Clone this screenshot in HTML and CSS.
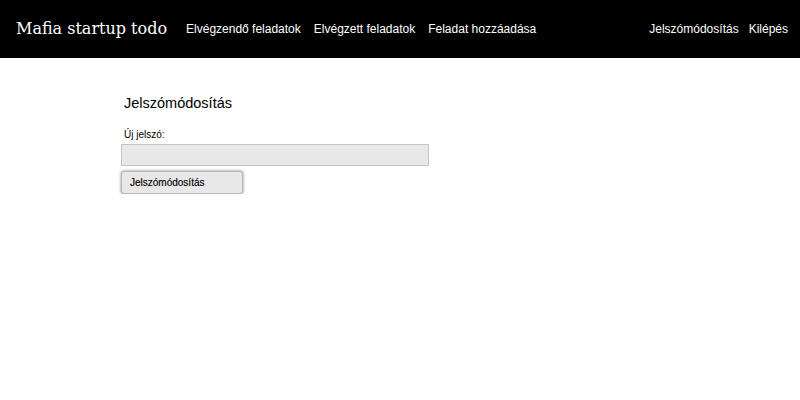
FILE: index.html
```html
<!DOCTYPE html>
<html lang="hu">
<head>
<meta charset="utf-8">
<title>Mafia startup todo</title>
<link rel="stylesheet" href="styles.css">
</head>
<body>
<header class="topbar">
  <div class="brand">Mafia startup todo</div>
  <nav class="nav">
    <a href="#">Elvégzendő feladatok</a>
    <a href="#">Elvégzett feladatok</a>
    <a href="#">Feladat hozzáadása</a>
  </nav>
  <nav class="nav nav-right">
    <a href="#">Jelszómódosítás</a>
    <a href="#">Kilépés</a>
  </nav>
</header>
<main class="content">
  <h1 class="title">Jelszómódosítás</h1>
  <form class="form">
    <label class="label" for="pw">Új jelszó:</label>
    <input class="input" id="pw" type="password">
    <button class="btn" type="button">Jelszómódosítás</button>
  </form>
</main>
</body>
</html>
```
FILE: styles.css
```css
* { box-sizing: border-box; }
html, body { margin: 0; padding: 0; background: #fff; }
body { font-family: "Liberation Sans", Arial, sans-serif; color: #000; }
.topbar {
  height: 58px;
  background: #000;
  display: flex;
  align-items: center;
  padding: 0 12px 0 16px;
}
.brand {
  font-family: "DejaVu Serif", serif;
  font-size: 16px;
  color: #fff;
  margin-right: 19px;
  margin-top: -1px;
}
.nav { display: flex; gap: 13px; }
.nav a {
  color: #fff;
  text-decoration: none;
  font-size: 12px;
}
.nav-right { margin-left: auto; gap: 10px; }
.content { padding: 0 0 0 121px; }
.title {
  font-size: 14.5px;
  font-weight: normal;
  margin: 36px 0 0 3px;
  line-height: 18px;
}
.form { display: flex; flex-direction: column; align-items: flex-start; }
.label {
  font-size: 10px;
  margin: 17px 0 0 3px;
  line-height: 12px;
}
.input {
  width: 308px;
  height: 22px;
  margin-top: 3px;
  background: #e8e8e8;
  border: 1px solid #c4c4c4;
  padding: 0;
}
.btn {
  margin-top: 5px;
  width: 122px;
  height: 23px;
  background: #e8e8e8;
  border: 1px solid #b8b8b8;
  border-radius: 3px;
  box-shadow: 0 0 3px rgba(0,0,0,0.5);
  font-family: "Liberation Sans", Arial, sans-serif;
  font-size: 10px;
  font-weight: normal;
  -webkit-text-stroke: 0.15px #000;
  text-align: left;
  padding: 0 0 0 8px;
  color: #000;
}
```
